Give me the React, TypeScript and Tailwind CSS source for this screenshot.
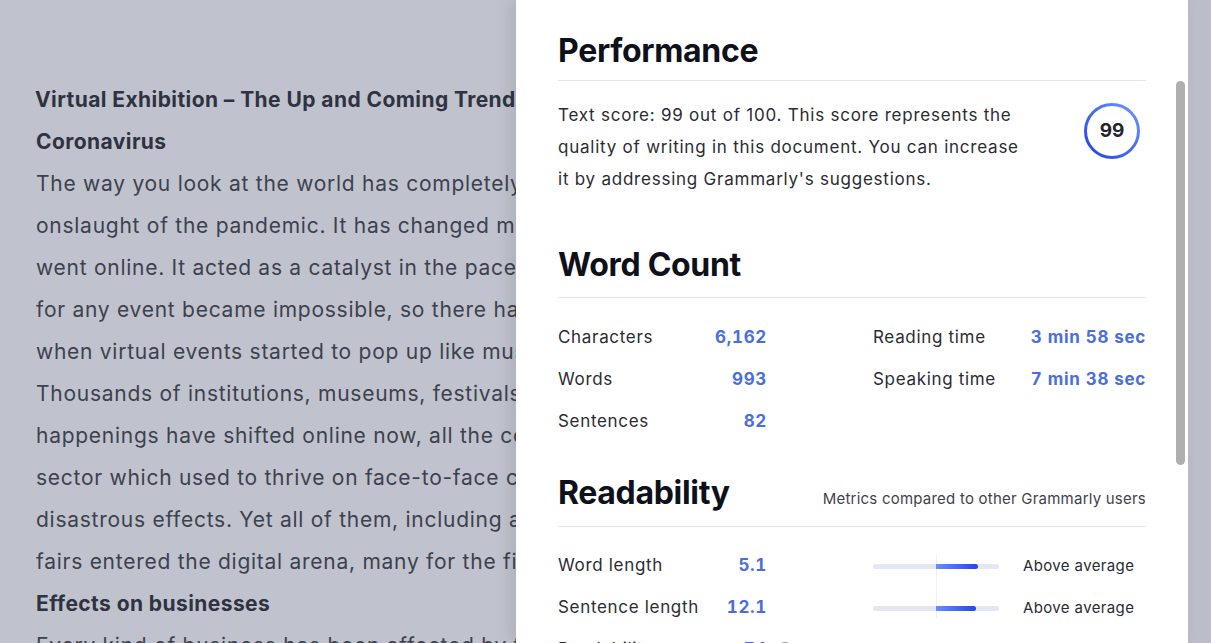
import type { ReactNode } from 'react'

type DocLine = { text: string; bold?: boolean }

const docLines: DocLine[] = [
  { text: 'Virtual Exhibition – The Up and Coming Trends During the', bold: true },
  { text: 'Coronavirus', bold: true },
  { text: 'The way you look at the world has completely changed with the' },
  { text: 'onslaught of the pandemic. It has changed many things, and events' },
  { text: 'went online. It acted as a catalyst in the pace of change. Gathering' },
  { text: 'for any event became impossible, so there had to be a new way. That is' },
  { text: 'when virtual events started to pop up like mushrooms after the rain.' },
  { text: 'Thousands of institutions, museums, festivals and other cultural' },
  { text: 'happenings have shifted online now, all the conferences, and the' },
  { text: 'sector which used to thrive on face-to-face contact suffered' },
  { text: 'disastrous effects. Yet all of them, including art galleries and trade' },
  { text: 'fairs entered the digital arena, many for the first time.' },
  { text: 'Effects on businesses', bold: true },
  { text: 'Every kind of business has been affected by the pandemic.' },
]

const font = "font-['Inter','Noto_Sans',sans-serif]"

function SectionHeading({ title, right, pb }: { title: string; right?: ReactNode; pb: string }) {
  return (
    <div className={`flex items-end justify-between border-b border-[#e3e5f0] ${pb}`}>
      <h2 className="text-[32px] leading-[36px] font-bold text-[#0e101a] tracking-[-0.01em]">{title}</h2>
      {right}
    </div>
  )
}

function Stat({ label, value }: { label: string; value: string }) {
  return (
    <div className="flex items-center justify-between h-[42px]">
      <span className="text-[17px] text-[#2a2c33] tracking-[0.04em]">{label}</span>
      <span className="text-[17px] font-bold text-[#4a6ee0] tracking-[0.04em] tabular-nums">{value}</span>
    </div>
  )
}

function ScoreBar({ fill }: { fill: number }) {
  return (
    <div className="relative w-[126px] h-[5px] rounded-full bg-[#e4e6f2]">
      <div
        className="absolute left-[63px] top-0 h-[5px] rounded-r-full bg-gradient-to-r from-[#6a8dff] to-[#2543e8]"
        style={{ width: `${fill}px` }}
      />
    </div>
  )
}

export default function App() {
  return (
    <div className={`flex h-[643px] w-[1211px] overflow-hidden bg-[#c0c3cd] ${font}`}>
      {/* document behind the overlay */}
      <div className="w-[516px] shrink-0 overflow-hidden pt-[79px] pl-[36px]">
        {docLines.map((line, i) => (
          <div
            key={i}
            className={`h-[42px] leading-[42px] whitespace-nowrap text-[21px] ${
              line.bold ? 'font-bold text-[#2e3241] tracking-[0.02em]' : 'text-[#3d414e] tracking-[0.035em]'
            } ${i === 0 ? 'flex items-center' : ''}`}
          >
            {i === 0 && <span className="inline-block w-px h-[24px] bg-[#8e98b6] -mr-px" />}
            {line.text}
          </div>
        ))}
      </div>

      {/* insights panel */}
      <div className="relative w-[672px] shrink-0 bg-white shadow-[-6px_0_14px_rgba(40,44,60,0.12)] overflow-hidden">
        <div className="absolute right-[3px] top-[81px] w-[9px] h-[384px] rounded-full bg-[#afafaf]" />

        <div className="px-[42px] pt-[33px]">
          <SectionHeading title="Performance" pb="pb-[11px]" />
          <div className="flex items-start justify-between mt-[18px]">
            <p className="w-[468px] text-[17px] leading-[32px] text-[#2a2c33] tracking-[0.045em]">
              Text score: 99 out of 100. This score represents the quality of writing in this document. You can
              increase it by addressing Grammarly's suggestions.
            </p>
            <div className="mt-[4px] mr-[6px] relative w-[56px] h-[56px] flex items-center justify-center">
              <svg width="56" height="56" viewBox="0 0 56 56" className="absolute inset-0">
                <defs>
                  <linearGradient id="ring" x1="0" y1="1" x2="1" y2="0">
                    <stop offset="0" stopColor="#2240e6" />
                    <stop offset="1" stopColor="#6f96ff" />
                  </linearGradient>
                </defs>
                <circle cx="28" cy="28" r="26.5" fill="none" stroke="url(#ring)" strokeWidth="3" />
              </svg>
              <span className="relative text-[19px] font-bold text-[#22252e]">99</span>
            </div>
          </div>

          <div className="mt-[52px]">
            <SectionHeading title="Word Count" pb="pb-[14px]" />
            <div className="grid grid-cols-[209px_273px] justify-between mt-[19px]">
              <div>
                <Stat label="Characters" value="6,162" />
                <Stat label="Words" value="993" />
                <Stat label="Sentences" value="82" />
              </div>
              <div>
                <Stat label="Reading time" value="3 min 58 sec" />
                <Stat label="Speaking time" value="7 min 38 sec" />
              </div>
            </div>
          </div>

          <div className="mt-[32px]">
            <SectionHeading
              title="Readability"
              pb="pb-[15px]"
              right={
                <span className="text-[15px] leading-[20px] text-[#3f424c] tracking-[0.015em] mb-[2px]">
                  Metrics compared to other Grammarly users
                </span>
              }
            />
            <div className="relative mt-[18px]">
              <div className="absolute left-[378px] top-[10px] w-px h-[64px] bg-[#eceef8]" />
              {[
                { label: 'Word length', value: '5.1', fill: 42 },
                { label: 'Sentence length', value: '12.1', fill: 40 },
                { label: 'Readability', value: '74', fill: 0 },
              ].map((row) => (
                <div key={row.label} className="flex items-center h-[42px]">
                  <div className="w-[209px]">
                    <Stat label={row.label} value={row.value} />
                  </div>
                  {row.fill > 0 && (
                    <div className="flex items-center ml-[106px]">
                      <ScoreBar fill={row.fill} />
                      <span className="ml-[24px] text-[15px] text-[#2a2c33] tracking-[0.025em]">Above average</span>
                    </div>
                  )}
                  {row.fill === 0 && (
                    <span className="ml-[10px] w-[16px] h-[16px] rounded-full border-2 border-[#9a9ca6]" />
                  )}
                </div>
              ))}
            </div>
          </div>
        </div>
      </div>

      <div className="flex-1 bg-[#bbbec8]" />
    </div>
  )
}
